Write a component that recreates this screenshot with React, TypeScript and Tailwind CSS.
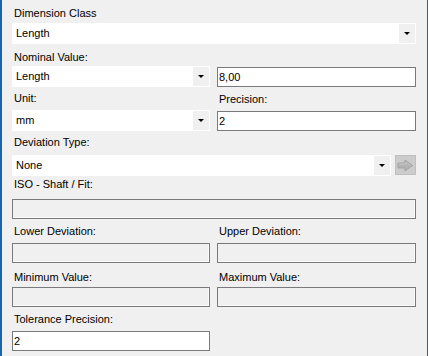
import React from "react";

const font = { fontFamily: '"Liberation Sans", Arial, sans-serif' };

const Arrow = () => (
  <svg width="6" height="3" viewBox="0 0 6 3" className="block">
    <path d="M0 0 H6 L3 3 Z" fill="#000" />
  </svg>
);

const Combo = ({ value, className = "" }: { value: string; className?: string }) => (
  <div className={`flex h-[21px] items-stretch bg-white p-px ${className}`}>
    <div className="flex flex-1 items-center pl-[3px] text-[11px] leading-[13px] text-black">{value}</div>
    <div className="flex w-[16px] items-center justify-center bg-[#f0f0f0]">
      <Arrow />
    </div>
  </div>
);

const TextBox = ({ value, disabled }: { value?: string; disabled?: boolean }) => (
  <div
    className={`flex h-[20px] items-center border pl-px text-[11px] leading-[13px] text-black ${
      disabled ? "border-[#7a7a7a] bg-[#f0f0f0] shadow-[inset_-1px_-1px_0_#fbfbfb]" : "border-[#7a7a7a] bg-white"
    }`}
  >
    {value}
  </div>
);

const Label = ({ children, className = "" }: { children: React.ReactNode; className?: string }) => (
  <div className={`h-[13px] pl-[2px] text-[11px] leading-[13px] text-black ${className}`}>{children}</div>
);

const GoButton = () => (
  <div className="flex h-[20px] w-[21px] items-center justify-center border border-[#bfbfbf] bg-[#cccccc]">
    <svg width="17" height="13" viewBox="0 0 17 13">
      <path d="M1 4 H8 V1 L15.5 6.5 L8 12 V9 H1 Z" fill="#b4b4b4" stroke="#a2a2a2" strokeWidth="1" />
      <path d="M2 5 H9 V3 L13.5 6.5" fill="none" stroke="#c6c6c6" strokeWidth="1" />
    </svg>
  </div>
);

export default function App() {
  return (
    <div
      style={font}
      className="flex h-[356px] w-[428px] flex-col border-l-2 border-r border-l-[#1c64a8] border-r-[#1c64a8] bg-[#f0f0f0] pl-[10px] pr-[11px] pt-[7px]"
    >
      <Label>Dimension Class</Label>
      <Combo value="Length" className="mt-[3px]" />

      <Label className="mt-[7px]">Nominal Value:</Label>
      <div className="mt-[2px] grid grid-cols-[198px_1fr] items-end gap-x-[7px]">
        <Combo value="Length" />
        <TextBox value="8,00" />
      </div>

      <div className="mt-[5px] grid grid-cols-[198px_1fr] gap-x-[7px]">
        <Label>Unit:</Label>
        <Label className="mt-[1px]">Precision:</Label>
      </div>
      <div className="mt-[4px] grid grid-cols-[198px_1fr] items-end gap-x-[7px]">
        <Combo value="mm" />
        <TextBox value="2" />
      </div>

      <Label className="mt-[5px]">Deviation Type:</Label>
      <div className="mt-[6px] flex items-start gap-[4px]">
        <Combo value="None" className="flex-1" />
        <GoButton />
      </div>

      <Label className="mt-[2px]">ISO - Shaft / Fit:</Label>
      <div className="mt-[8px]">
        <TextBox disabled />
      </div>

      <div className="mt-[6px] grid grid-cols-[198px_1fr] gap-x-[7px]">
        <Label>Lower Deviation:</Label>
        <Label>Upper Deviation:</Label>
      </div>
      <div className="mt-[5px] grid grid-cols-[198px_1fr] gap-x-[7px]">
        <TextBox disabled />
        <TextBox disabled />
      </div>

      <div className="mt-[8px] grid grid-cols-[198px_1fr] gap-x-[7px]">
        <Label>Minimum Value:</Label>
        <Label>Maximum Value:</Label>
      </div>
      <div className="mt-[3px] grid grid-cols-[198px_1fr] gap-x-[7px]">
        <TextBox disabled />
        <TextBox disabled />
      </div>

      <Label className="mt-[6px]">Tolerance Precision:</Label>
      <div className="mt-[5px] w-[198px]">
        <TextBox value="2" />
      </div>
    </div>
  );
}
